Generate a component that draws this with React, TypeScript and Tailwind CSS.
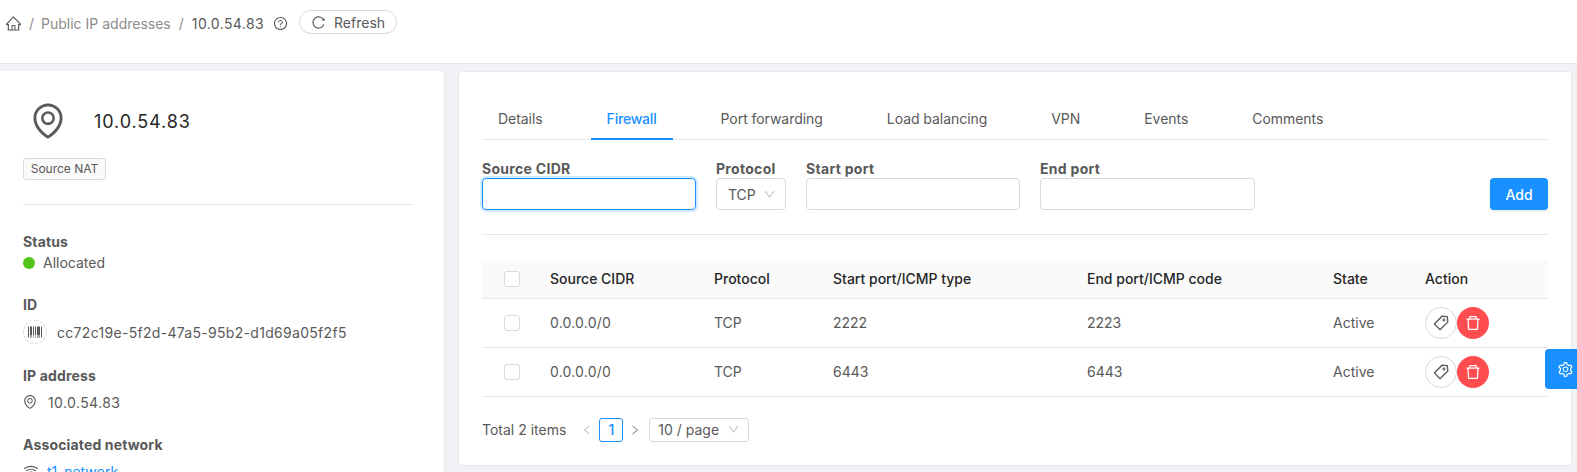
import {
  AiOutlineBarcode,
  AiOutlineDelete,
  AiOutlineDown,
  AiOutlineEnvironment,
  AiOutlineHome,
  AiOutlineLeft,
  AiOutlineQuestionCircle,
  AiOutlineReload,
  AiOutlineRight,
  AiOutlineSetting,
  AiOutlineTag,
  AiOutlineWifi,
} from 'react-icons/ai'

const tabs = ['Details', 'Firewall', 'Port forwarding', 'Load balancing', 'VPN', 'Events', 'Comments']

const rules = [
  { cidr: '0.0.0.0/0', protocol: 'TCP', start: '2222', end: '2223', state: 'Active' },
  { cidr: '0.0.0.0/0', protocol: 'TCP', start: '6443', end: '6443', state: 'Active' },
]

function Checkbox() {
  return <div className="h-4 w-4 rounded-[3px] border border-[#d9d9d9] bg-white" />
}

function Header() {
  return (
    <header className="flex h-[64px] shrink-0 items-start border-b border-[#e8e8e8] bg-white pl-[5px] pt-[10px]">
      <div className="flex h-[26px] items-center text-[14px] text-[#8c8c8c]">
        <AiOutlineHome className="text-[17px] text-[#595959]" />
        <span className="ml-[7px]">/</span>
        <span className="ml-[7px]">Public IP addresses</span>
        <span className="ml-[8px]">/</span>
        <span className="ml-[8px] tracking-[0.4px] text-[#595959]">10.0.54.83</span>
        <AiOutlineQuestionCircle className="ml-[9px] text-[15px] text-[#595959]" />
        <button className="ml-[11px] flex h-[24px] w-[98px] items-center justify-center gap-[8px] self-start rounded-full border border-[#d9d9d9] pt-[1px] text-[#595959]">
          <AiOutlineReload className="text-[15px]" />
          Refresh
        </button>
      </div>
    </header>
  )
}

function Sidebar() {
  return (
    <aside className="w-[445px] shrink-0 rounded-r-[4px] border-r border-[#e8e8e8] bg-white pl-[23px] pr-[30px] pt-[30px] text-[14px] text-[#595959]">
      <div className="flex items-center">
        <AiOutlineEnvironment className="ml-[5px] text-[40px] text-[#595959]" />
        <span className="ml-[26px] text-[18px] tracking-[0.9px] text-[#262626]">10.0.54.83</span>
      </div>
      <div className="mt-[17px] h-[22px] w-[83px] rounded-[3px] border border-[#d9d9d9] bg-[#fafafa] text-center text-[12px] leading-[20px]">
        Source NAT
      </div>
      <div className="mt-[24px] border-t border-[#e8e8e8]" />
      <div className="mt-[27px] font-bold leading-[20px] tracking-[0.15px]">Status</div>
      <div className="flex h-[21px] items-center">
        <span className="h-3 w-3 rounded-full bg-[#52c41a]" />
        <span className="ml-[8px]">Allocated</span>
      </div>
      <div className="mt-[22px] font-bold leading-[20px] tracking-[0.15px]">ID</div>
      <div className="mt-[5px] flex items-center">
        <span className="flex h-6 w-6 items-center justify-center rounded-full border border-dashed border-[#d9d9d9]">
          <AiOutlineBarcode className="text-[16px]" />
        </span>
        <span className="ml-[10px] tracking-[0.3px]">cc72c19e-5f2d-47a5-95b2-d1d69a05f2f5</span>
      </div>
      <div className="mt-[22px] font-bold leading-[20px] tracking-[0.15px]">IP address</div>
      <div className="mt-[5px] flex h-[22px] items-center">
        <AiOutlineEnvironment className="-ml-[1px] text-[16px]" />
        <span className="ml-[10px] tracking-[0.4px]">10.0.54.83</span>
      </div>
      <div className="mt-[22px] font-bold leading-[20px] tracking-[0.15px]">Associated network</div>
      <div className="mt-[5px] flex h-[22px] items-center">
        <AiOutlineWifi className="text-[16px]" />
        <span className="ml-[8px] text-[#1890ff]">t1_network</span>
      </div>
    </aside>
  )
}

function Field({ label, width, children }: { label: string; width: string; children?: React.ReactNode }) {
  return (
    <div className={width}>
      <div className="h-[20px] text-[14px] font-bold leading-[20px] tracking-[0.3px] text-[#595959]">{label}</div>
      <div className="mt-[-1px]">{children}</div>
    </div>
  )
}

function FirewallForm() {
  return (
    <div className="flex items-end border-b border-[#e8e8e8] pb-[24px] pt-[19px]">
      <Field label="Source CIDR" width="w-[214px]">
        <input className="h-[32px] w-full rounded-[4px] border border-[#1890ff] shadow-[0_0_0_2px_rgba(24,144,255,0.2)] outline-none" />
      </Field>
      <div className="ml-[20px]">
        <Field label="Protocol" width="w-[70px]">
          <div className="flex h-[32px] items-center justify-between rounded-[4px] border border-[#d9d9d9] pl-[11px] pr-[9px] text-[14px] text-[#595959]">
            TCP
            <AiOutlineDown className="text-[13px] text-[#bfbfbf]" />
          </div>
        </Field>
      </div>
      <div className="ml-[20px]">
        <Field label="Start port" width="w-[214px]">
          <input className="h-[32px] w-full rounded-[4px] border border-[#d9d9d9] outline-none" />
        </Field>
      </div>
      <div className="ml-[20px]">
        <Field label="End port" width="w-[215px]">
          <input className="h-[32px] w-full rounded-[4px] border border-[#d9d9d9] outline-none" />
        </Field>
      </div>
      <button className="ml-auto h-[32px] w-[58px] rounded-[4px] bg-[#1890ff] text-[14px] font-medium text-white shadow-sm">
        Add
      </button>
    </div>
  )
}

function RulesTable() {
  return (
    <table className="mt-[25px] w-[1066px] table-fixed border-collapse text-left text-[14px] text-[#595959]">
      <colgroup>
        <col className="w-[52px]" />
        <col className="w-[164px]" />
        <col className="w-[119px]" />
        <col className="w-[254px]" />
        <col className="w-[246px]" />
        <col className="w-[92px]" />
        <col />
      </colgroup>
      <thead>
        <tr className="h-[38px] border-b border-[#e8e8e8] bg-[#fafafa] text-[#262626]">
          <th className="pl-[22px]">
            <Checkbox />
          </th>
          <th className="pl-[16px] font-medium">Source CIDR</th>
          <th className="pl-[16px] font-medium">Protocol</th>
          <th className="pl-[16px] font-medium">Start port/ICMP type</th>
          <th className="pl-[16px] font-medium">End port/ICMP code</th>
          <th className="pl-[16px] font-medium">State</th>
          <th className="pl-[16px] font-medium">Action</th>
        </tr>
      </thead>
      <tbody>
        {rules.map((rule) => (
          <tr key={rule.start} className="h-[49px] border-b border-[#e8e8e8]">
            <td className="pl-[22px]">
              <Checkbox />
            </td>
            <td className="pl-[16px] tracking-[0.2px]">{rule.cidr}</td>
            <td className="pl-[16px]">{rule.protocol}</td>
            <td className="pl-[16px]">{rule.start}</td>
            <td className="pl-[16px]">{rule.end}</td>
            <td className="pl-[16px]">{rule.state}</td>
            <td className="pl-[16px]">
              <div className="flex">
                <button className="flex h-8 w-8 items-center justify-center rounded-full border border-[#d9d9d9] bg-white">
                  <AiOutlineTag className="text-[18px]" />
                </button>
                <button className="flex h-8 w-8 items-center justify-center rounded-full bg-[#ff4d4f] text-white">
                  <AiOutlineDelete className="text-[18px]" />
                </button>
              </div>
            </td>
          </tr>
        ))}
      </tbody>
    </table>
  )
}

function Pagination() {
  return (
    <div className="mt-[21px] flex h-[24px] items-center text-[14px] text-[#595959]">
      <span>Total 2 items</span>
      <AiOutlineLeft className="ml-[15px] text-[12px] text-[#bfbfbf]" />
      <span className="ml-[6px] flex h-[24px] w-[24px] items-center justify-center rounded-[3px] border border-[#1890ff] font-medium text-[#1890ff]">
        1
      </span>
      <AiOutlineRight className="ml-[6px] text-[12px] text-[#8c8c8c]" />
      <div className="ml-[8px] flex h-[24px] w-[100px] items-center justify-between rounded-[3px] border border-[#d9d9d9] pl-[8px] pr-[8px]">
        10 / page
        <AiOutlineDown className="text-[13px] text-[#bfbfbf]" />
      </div>
    </div>
  )
}

function Content() {
  return (
    <main className="ml-[13px] h-[395px] w-[1114px] shrink-0 rounded-[4px] border border-[#e8e8e8] bg-white pl-[23px] pr-[23px] pt-[28px]">
      <nav className="flex h-[40px] gap-[32px] border-b border-[#e8e8e8] text-[14px] text-[#595959]">
        {tabs.map((tab) => (
          <div
            key={tab}
            className={
              tab === 'Firewall'
                ? 'mb-[-1px] flex h-[40px] items-center border-b-2 border-[#1890ff] px-[16px] pb-[1px] font-medium tracking-[-0.2px] text-[#1890ff]'
                : 'mb-[-1px] flex h-[40px] items-center px-[16px] pb-[3px] tracking-[-0.05px]'
            }
          >
            {tab}
          </div>
        ))}
      </nav>
      <FirewallForm />
      <RulesTable />
      <Pagination />
    </main>
  )
}

export default function App() {
  return (
    <div className="relative flex h-[472px] w-[1577px] flex-col overflow-hidden bg-[#f0f2f5] font-['Inter',sans-serif]">
      <Header />
      <div className="flex min-h-0 flex-1 items-start pt-[7px]">
        <Sidebar />
        <Content />
      </div>
      <button className="absolute left-[1545px] top-[349px] flex h-[40px] w-[32px] items-center rounded-l-[4px] bg-[#1890ff] pl-[12px] text-white">
        <AiOutlineSetting className="text-[17px]" />
      </button>
    </div>
  )
}
